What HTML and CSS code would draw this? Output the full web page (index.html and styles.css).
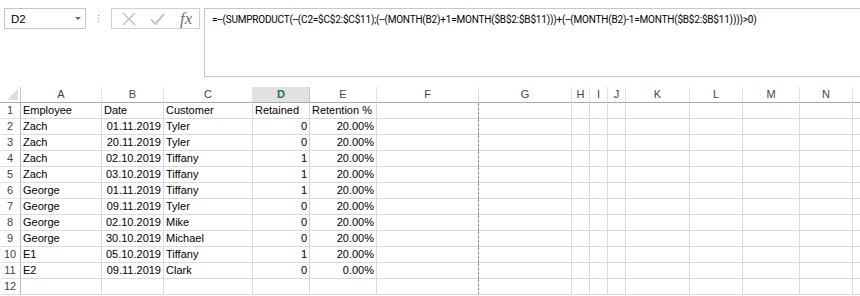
FILE: index.html
```html
<!DOCTYPE html>
<html lang="en">
<head>
  <meta charset="UTF-8">
  <title>Retention sheet</title>
  <link rel="stylesheet" href="styles.css">
</head>
<body>
  <div class="toolbar">
    <div class="name-box">
      <span>D2</span>
      <span class="caret"></span>
    </div>
    <div class="grip"><i></i><i></i><i></i></div>
    <div class="fx-box">
      <svg class="icon" width="14" height="14" viewBox="0 0 14 14">
        <path d="M1 1L13 13M13 1L1 13" stroke="#c4c4c4" stroke-width="1.6" fill="none"/>
      </svg>
      <svg class="icon" width="15" height="14" viewBox="0 0 15 14">
        <path d="M1 7.5L5.5 12L14 2" stroke="#c4c4c4" stroke-width="2" fill="none"/>
      </svg>
      <span class="fx">fx</span>
    </div>
    <div class="formula">=--(SUMPRODUCT(--(C2=$C$2:$C$11);(--(MONTH(B2)+1=MONTH($B$2:$B$11)))+(--(MONTH(B2)-1=MONTH($B$2:$B$11))))&gt;0)</div>
  </div>

  <div class="sheet">
    <div class="corner"><span></span></div>
    <div class="col-head">A</div>
    <div class="col-head">B</div>
    <div class="col-head">C</div>
    <div class="col-head active">D</div>
    <div class="col-head">E</div>
    <div class="col-head">F</div>
    <div class="col-head">G</div>
    <div class="col-head">H</div>
    <div class="col-head">I</div>
    <div class="col-head">J</div>
    <div class="col-head">K</div>
    <div class="col-head">L</div>
    <div class="col-head">M</div>
    <div class="col-head">N</div>
    <div class="col-head"></div>

    <div class="row-head">1</div>
    <div class="cell">Employee</div><div class="cell">Date</div><div class="cell">Customer</div><div class="cell">Retained</div><div class="cell">Retention %</div>
    <div class="cell brk"></div><div class="cell"></div><div class="cell"></div><div class="cell"></div><div class="cell"></div><div class="cell"></div><div class="cell"></div><div class="cell"></div><div class="cell"></div><div class="cell"></div>

    <div class="row-head">2</div>
    <div class="cell">Zach</div><div class="cell num">01.11.2019</div><div class="cell">Tyler</div><div class="cell num">0</div><div class="cell num">20.00%</div>
    <div class="cell brk"></div><div class="cell"></div><div class="cell"></div><div class="cell"></div><div class="cell"></div><div class="cell"></div><div class="cell"></div><div class="cell"></div><div class="cell"></div><div class="cell"></div>

    <div class="row-head">3</div>
    <div class="cell">Zach</div><div class="cell num">20.11.2019</div><div class="cell">Tyler</div><div class="cell num">0</div><div class="cell num">20.00%</div>
    <div class="cell brk"></div><div class="cell"></div><div class="cell"></div><div class="cell"></div><div class="cell"></div><div class="cell"></div><div class="cell"></div><div class="cell"></div><div class="cell"></div><div class="cell"></div>

    <div class="row-head">4</div>
    <div class="cell">Zach</div><div class="cell num">02.10.2019</div><div class="cell">Tiffany</div><div class="cell num">1</div><div class="cell num">20.00%</div>
    <div class="cell brk"></div><div class="cell"></div><div class="cell"></div><div class="cell"></div><div class="cell"></div><div class="cell"></div><div class="cell"></div><div class="cell"></div><div class="cell"></div><div class="cell"></div>

    <div class="row-head">5</div>
    <div class="cell">Zach</div><div class="cell num">03.10.2019</div><div class="cell">Tiffany</div><div class="cell num">1</div><div class="cell num">20.00%</div>
    <div class="cell brk"></div><div class="cell"></div><div class="cell"></div><div class="cell"></div><div class="cell"></div><div class="cell"></div><div class="cell"></div><div class="cell"></div><div class="cell"></div><div class="cell"></div>

    <div class="row-head">6</div>
    <div class="cell">George</div><div class="cell num">01.11.2019</div><div class="cell">Tiffany</div><div class="cell num">1</div><div class="cell num">20.00%</div>
    <div class="cell brk"></div><div class="cell"></div><div class="cell"></div><div class="cell"></div><div class="cell"></div><div class="cell"></div><div class="cell"></div><div class="cell"></div><div class="cell"></div><div class="cell"></div>

    <div class="row-head">7</div>
    <div class="cell">George</div><div class="cell num">09.11.2019</div><div class="cell">Tyler</div><div class="cell num">0</div><div class="cell num">20.00%</div>
    <div class="cell brk"></div><div class="cell"></div><div class="cell"></div><div class="cell"></div><div class="cell"></div><div class="cell"></div><div class="cell"></div><div class="cell"></div><div class="cell"></div><div class="cell"></div>

    <div class="row-head">8</div>
    <div class="cell">George</div><div class="cell num">02.10.2019</div><div class="cell">Mike</div><div class="cell num">0</div><div class="cell num">20.00%</div>
    <div class="cell brk"></div><div class="cell"></div><div class="cell"></div><div class="cell"></div><div class="cell"></div><div class="cell"></div><div class="cell"></div><div class="cell"></div><div class="cell"></div><div class="cell"></div>

    <div class="row-head">9</div>
    <div class="cell">George</div><div class="cell num">30.10.2019</div><div class="cell">Michael</div><div class="cell num">0</div><div class="cell num">20.00%</div>
    <div class="cell brk"></div><div class="cell"></div><div class="cell"></div><div class="cell"></div><div class="cell"></div><div class="cell"></div><div class="cell"></div><div class="cell"></div><div class="cell"></div><div class="cell"></div>

    <div class="row-head">10</div>
    <div class="cell">E1</div><div class="cell num">05.10.2019</div><div class="cell">Tiffany</div><div class="cell num">1</div><div class="cell num">20.00%</div>
    <div class="cell brk"></div><div class="cell"></div><div class="cell"></div><div class="cell"></div><div class="cell"></div><div class="cell"></div><div class="cell"></div><div class="cell"></div><div class="cell"></div><div class="cell"></div>

    <div class="row-head">11</div>
    <div class="cell">E2</div><div class="cell num">09.11.2019</div><div class="cell">Clark</div><div class="cell num">0</div><div class="cell num">0.00%</div>
    <div class="cell brk"></div><div class="cell"></div><div class="cell"></div><div class="cell"></div><div class="cell"></div><div class="cell"></div><div class="cell"></div><div class="cell"></div><div class="cell"></div><div class="cell"></div>

    <div class="row-head">12</div>
    <div class="cell"></div><div class="cell"></div><div class="cell"></div><div class="cell"></div><div class="cell"></div>
    <div class="cell brk"></div><div class="cell"></div><div class="cell"></div><div class="cell"></div><div class="cell"></div><div class="cell"></div><div class="cell"></div><div class="cell"></div><div class="cell"></div><div class="cell"></div>
  </div>
</body>
</html>
```

FILE: styles.css
```css
body {
  margin: 0;
  background: #fff;
  color: #000;
  font-family: "Liberation Sans", Arial, sans-serif;
  font-size: 11px;
  overflow: hidden;
}
.toolbar {
  display: flex;
  align-items: flex-start;
  height: 87px;
  padding: 8px 0 0 4px;
  box-sizing: border-box;
}
.name-box {
  width: 82px;
  height: 21px;
  box-sizing: border-box;
  border: 1px solid #c6c6c6;
  display: flex;
  align-items: center;
  justify-content: space-between;
  padding: 0 4px 0 6px;
  font-size: 11.5px;
}
.caret {
  width: 0;
  height: 0;
  border-left: 3px solid transparent;
  border-right: 3px solid transparent;
  border-top: 3px solid #6a6a6a;
  margin-bottom: 1px;
}
.grip {
  width: 25px;
  height: 21px;
  display: flex;
  flex-direction: column;
  align-items: center;
  justify-content: center;
  gap: 2px;
}
.grip i {
  width: 1px;
  height: 1px;
  background: #9a9a9a;
}
.fx-box {
  width: 89px;
  height: 21px;
  box-sizing: border-box;
  border: 1px solid #d0d0d0;
  display: flex;
  align-items: center;
  padding: 0 0 0 10px;
  gap: 14px;
}
.fx {
  font-family: "Liberation Serif", "Times New Roman", serif;
  font-style: italic;
  font-size: 17px;
  color: #707070;
  margin-left: 1px;
}
.formula {
  flex: 1;
  height: 69px;
  margin-left: 4px;
  margin-right: -4px;
  box-sizing: border-box;
  border: 1px solid #c6c6c6;
  padding: 4px 0 0 7px;
  white-space: nowrap;
  font-family: Roboto, "Liberation Sans", sans-serif;
  font-size: 10px;
  letter-spacing: -0.2px;
  line-height: 13px;
}
.sheet {
  display: grid;
  grid-template-columns: 21px 81px 62px 89px 57px 67px 102px 93px 18px 18px 18px 64px 53px 57px 53px 60px;
  grid-auto-rows: 16px;
}
.sheet > div {
  box-sizing: border-box;
  border-right: 1px solid #dadada;
  border-bottom: 1px solid #dadada;
  line-height: 15px;
  white-space: nowrap;
  overflow: hidden;
}
.corner {
  position: relative;
}
.corner span {
  position: absolute;
  right: 2px;
  bottom: 2px;
  width: 0;
  height: 0;
  border-left: 11px solid transparent;
  border-bottom: 11px solid #dedede;
}
.sheet .col-head {
  text-align: center;
  color: #444;
  border-bottom-color: #a9a9a9;
  border-right-color: #e1e1e1;
}
.sheet .col-head.active {
  background: #e1e1e1;
  color: #217346;
  font-weight: bold;
  border-right-color: #c6c6c6;
}
.sheet .corner {
  border-bottom-color: #a9a9a9;
  border-right-color: #c6c6c6;
}
.sheet .row-head {
  text-align: center;
  color: #444;
  border-right-color: #b9b9b9;
  border-bottom-color: #e1e1e1;
}
.cell {
  padding: 0 2px;
}
.num {
  text-align: right;
}
.sheet .brk {
  border-right: 1px dashed #8c8c8c;
}
```
